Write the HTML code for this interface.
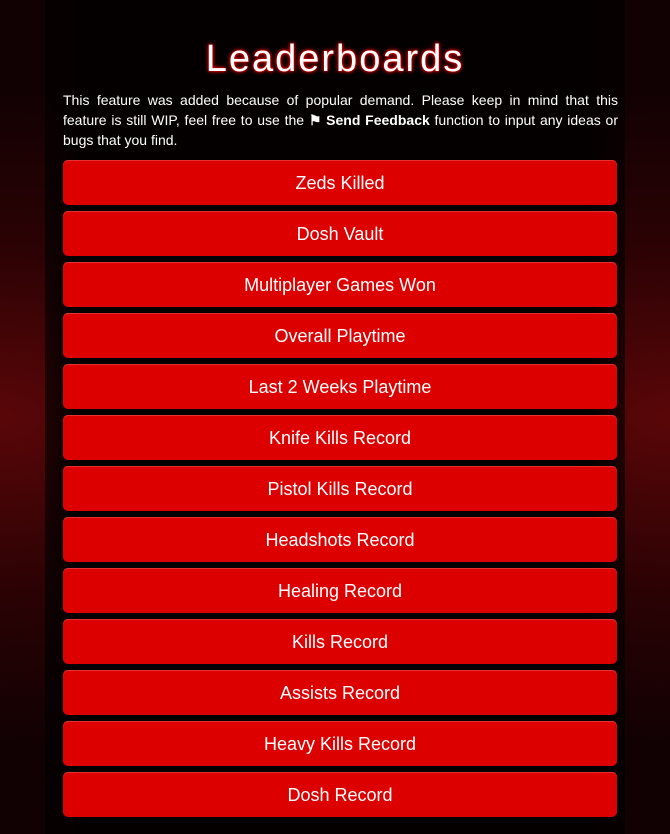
<!DOCTYPE html>
<html><head><style>
html,body{margin:0;padding:0;}
body{width:670px;height:834px;overflow:hidden;position:relative;font-family:"Liberation Sans",sans-serif;
background:radial-gradient(ellipse at 0% 50%,#5a0608 0%,#2a0204 30%,transparent 55%),radial-gradient(ellipse at 100% 50%,#5a0608 0%,#2a0204 30%,transparent 55%),#120103;}
.wrap{position:absolute;left:45px;top:0;width:580px;height:834px;background:linear-gradient(90deg,rgba(0,0,0,0.6),#050000 6%,#050000 94%,rgba(0,0,0,0.6));}
h1{position:absolute;left:0;top:38px;width:670px;margin:0;text-align:center;color:#fff;font-size:38px;font-weight:normal;letter-spacing:2px;
text-shadow:0 0 1px #f00,0 0 3px #f00,0 0 5px #c00;}
p{position:absolute;left:63px;top:90px;width:555px;margin:0;color:#fff;font-size:14px;line-height:20px;text-align:justify;}
.b{position:absolute;left:63px;width:554px;height:45px;background:#dc0000;border-radius:5px;color:#fff;font-size:18px;text-align:center;line-height:46px;box-shadow:inset 0 1px 0 #e83030;}
</style></head><body>
<div class="wrap"></div>
<h1>Leaderboards</h1>
<p>This feature was added because of popular demand. Please keep in mind that this feature is still WIP, feel free to use the <b>&#9873; Send Feedback</b> function to input any ideas or bugs that you find.</p>
<div class="b" style="top:160px">Zeds Killed</div>
<div class="b" style="top:211px">Dosh Vault</div>
<div class="b" style="top:262px">Multiplayer Games Won</div>
<div class="b" style="top:313px">Overall Playtime</div>
<div class="b" style="top:364px">Last 2 Weeks Playtime</div>
<div class="b" style="top:415px">Knife Kills Record</div>
<div class="b" style="top:466px">Pistol Kills Record</div>
<div class="b" style="top:517px">Headshots Record</div>
<div class="b" style="top:568px">Healing Record</div>
<div class="b" style="top:619px">Kills Record</div>
<div class="b" style="top:670px">Assists Record</div>
<div class="b" style="top:721px">Heavy Kills Record</div>
<div class="b" style="top:772px">Dosh Record</div>
</body></html>
